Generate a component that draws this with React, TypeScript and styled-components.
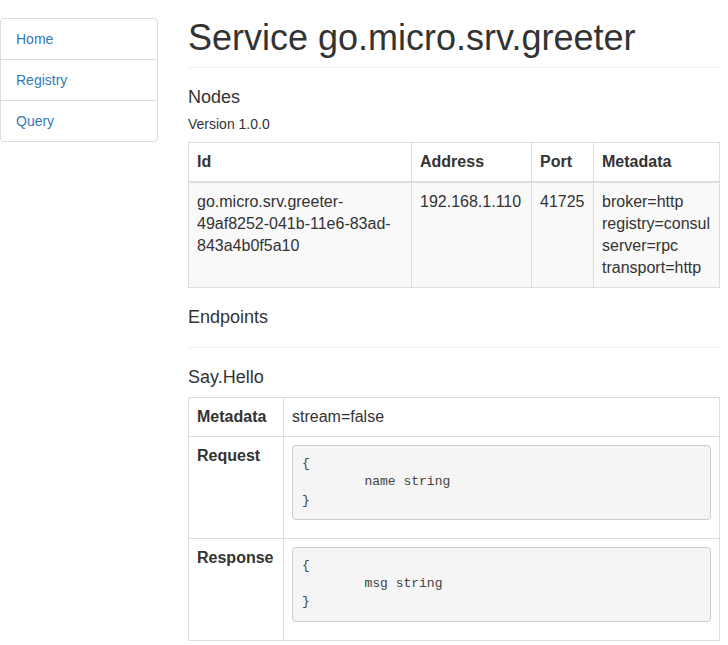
import React from "react";
import styled, { createGlobalStyle } from "styled-components";

const GlobalStyle = createGlobalStyle`
  html, body {
    margin: 0;
    padding: 0;
    background: #fff;
  }
  body {
    font-family: "Liberation Sans", Arial, Helvetica, sans-serif;
    font-size: 14px;
    line-height: 1.42857143;
    color: #333;
  }
  * { box-sizing: border-box; }
`;

const Page = styled.div`
  display: grid;
  grid-template-columns: 158px 1fr;
  column-gap: 30px;
  padding-right: 8px;
  align-items: start;
`;

const SideNav = styled.nav`
  margin-top: 18px;
  border: 1px solid #ddd;
  border-radius: 4px;
  display: flex;
  flex-direction: column;
  background: #fff;
`;

const NavItem = styled.a`
  display: block;
  padding: 10px 15px;
  line-height: 20px;
  font-size: 14px;
  color: #337ab7;
  text-decoration: none;
  & + & {
    border-top: 1px solid #ddd;
  }
`;

const Main = styled.main`
  padding-top: 18px;
  min-width: 0;
`;

const PageHeader = styled.div`
  padding-bottom: 9px;
  border-bottom: 1px solid #eee;
  margin-bottom: 20px;
`;

const Title = styled.h1`
  margin: 0;
  font-size: 36px;
  font-weight: 500;
  line-height: 1.1;
  color: #333;
`;

const SectionTitle = styled.h4`
  margin: 0 0 10px;
  font-size: 18px;
  font-weight: 500;
  line-height: 19px;
  color: #333;
`;

const SubTitle = styled.h5`
  margin: 0 0 10px;
  font-size: 14px;
  font-weight: 500;
  line-height: 1.1;
  color: #333;
`;

const Divider = styled.hr`
  margin: 20px 0;
  border: 0;
  border-top: 1px solid #eee;
  height: 0;
`;

const Table = styled.table<{ $striped?: boolean }>`
  width: 100%;
  border-collapse: collapse;
  border-spacing: 0;
  border: 1px solid #ddd;
  margin-bottom: 20px;
  font-size: 16px;
  line-height: 22px;

  th, td {
    border: 1px solid #ddd;
    padding: 8px;
    vertical-align: top;
    text-align: left;
  }
  thead th {
    border-bottom-width: 2px;
    vertical-align: bottom;
  }
  tbody tr:nth-of-type(odd) {
    background: ${(p) => (p.$striped ? "#f9f9f9" : "transparent")};
  }
`;

const HeadCell = styled.th<{ $w?: number }>`
  font-weight: bold;
  width: ${(p) => (p.$w ? `${p.$w}px` : "auto")};
`;

const LabelCell = styled.th`
  width: 95px;
  white-space: nowrap;
  font-weight: bold;
`;

const Code = styled.pre`
  margin: 0 0 10px;
  padding: 9px 9.5px 9px 9px;
  font-family: "Liberation Mono", "Courier New", monospace;
  font-size: 13px;
  line-height: 18.3px;
  color: #444;
  background: #f5f5f5;
  border: 1px solid #ccc;
  border-radius: 4px;
  white-space: pre;
  tab-size: 8;
  -moz-tab-size: 8;
  overflow: hidden;
`;

const metadata = ["broker=http", "registry=consul", "server=rpc", "transport=http"];

export default function App() {
  return (
    <>
      <GlobalStyle />
      <Page>
        <SideNav>
          <NavItem href="#">Home</NavItem>
          <NavItem href="#">Registry</NavItem>
          <NavItem href="#">Query</NavItem>
        </SideNav>
        <Main>
          <PageHeader>
            <Title>Service go.micro.srv.greeter</Title>
          </PageHeader>
          <SectionTitle>Nodes</SectionTitle>
          <SubTitle>Version 1.0.0</SubTitle>
          <Table $striped>
            <thead>
              <tr>
                <HeadCell>Id</HeadCell>
                <HeadCell $w={120}>Address</HeadCell>
                <HeadCell $w={62}>Port</HeadCell>
                <HeadCell $w={126}>Metadata</HeadCell>
              </tr>
            </thead>
            <tbody>
              <tr>
                <td>
                  go.micro.srv.greeter-<wbr />49af8252-041b-11e6-83ad-<wbr />843a4b0f5a10
                </td>
                <td>192.168.1.110</td>
                <td>41725</td>
                <td>
                  {metadata.map((m, i) => (
                    <React.Fragment key={m}>
                      {i > 0 && <br />}
                      {m}
                    </React.Fragment>
                  ))}
                </td>
              </tr>
            </tbody>
          </Table>
          <SectionTitle>Endpoints</SectionTitle>
          <Divider />
          <SectionTitle>Say.Hello</SectionTitle>
          <Table>
            <tbody>
              <tr>
                <LabelCell>Metadata</LabelCell>
                <td>stream=false</td>
              </tr>
              <tr>
                <LabelCell>Request</LabelCell>
                <td>
                  <Code>{"{\n\tname string\n}"}</Code>
                </td>
              </tr>
              <tr>
                <LabelCell>Response</LabelCell>
                <td>
                  <Code>{"{\n\tmsg string\n}"}</Code>
                </td>
              </tr>
            </tbody>
          </Table>
        </Main>
      </Page>
    </>
  );
}
